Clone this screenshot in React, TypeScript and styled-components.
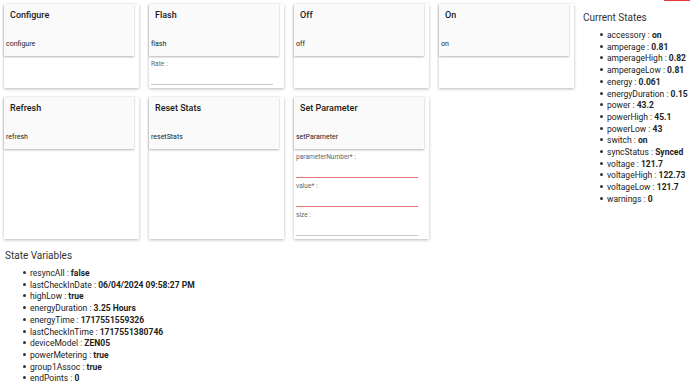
import React from 'react'
import styled, { createGlobalStyle } from 'styled-components'

const GlobalStyle = createGlobalStyle`
  body {
    margin: 0;
    background: #fff;
    font-family: Roboto, "Liberation Sans", sans-serif;
    color: #222;
  }
`

const Page = styled.div`
  padding: 4px 0 0 4px;
`

const Top = styled.div`
  display: flex;
  align-items: flex-start;
`

const Grid = styled.div`
  display: grid;
  grid-template-columns: repeat(4, 135px);
  column-gap: 10px;
  row-gap: 9px;
`

const Card = styled.div`
  background: #fff;
  box-shadow: 0 1px 3px rgba(0, 0, 0, 0.28);
  display: flex;
  flex-direction: column;
  padding-bottom: 3px;
`

const CommandHeader = styled.div`
  width: 130px;
  height: 52px;
  box-sizing: border-box;
  background: #fafafa;
  box-shadow: 0 1px 2px rgba(0, 0, 0, 0.3);
  display: flex;
  flex-direction: column;
  justify-content: space-between;
  padding: 6px 0 7px 0;
`

const CardTitle = styled.div`
  font-size: 9px;
  font-weight: 500;
  line-height: 11px;
  color: #1a1a1a;
  padding-left: 6px;
`

const CommandName = styled.div`
  font-size: 7px;
  line-height: 9px;
  color: #222;
  padding-left: 2px;
`

const Field = styled.div`
  padding: 0 2px;
  margin-top: 3px;

  &:first-of-type {
    margin-top: 1px;
  }
`

const FieldLabel = styled.div`
  font-size: 6.6px;
  line-height: 10px;
  color: #666;
`

const FieldInput = styled.div<{ $required?: boolean }>`
  width: 122px;
  height: 15px;
  border-bottom: 1px solid ${({ $required }) => ($required ? '#e57373' : '#c8c8c8')};
`

const StatesPanel = styled.div`
  margin-left: 9px;
  margin-top: 8px;
`

const SectionTitle = styled.div`
  font-size: 10px;
  line-height: 12px;
  color: #333;
`

const AttrList = styled.ul<{ $indent: number }>`
  margin: 6px 0 0 0;
  padding-left: ${({ $indent }) => $indent}px;
  list-style: none;
  font-size: 8.5px;
  line-height: 11.7px;
  color: #222;
`

const AttrItem = styled.li`
  &::before {
    content: '';
    display: inline-block;
    width: 3px;
    height: 3px;
    border-radius: 50%;
    background: #333;
    margin-left: -7px;
    margin-right: 4px;
    vertical-align: 2px;
  }
`

const AttrValue = styled.b`
  font-weight: 700;
`

const StateVars = styled.div`
  margin-top: 11px;
  padding-left: 1px;
`

const TopBar = styled.div`
  position: fixed;
  top: 0;
  right: 0;
  width: 26px;
  height: 1px;
  background: #e53935;
`

type Input = { label: string; required?: boolean }
type Command = { title: string; name: string; inputs?: Input[] }

const commands: Command[] = [
  { title: 'Configure', name: 'configure' },
  { title: 'Flash', name: 'flash', inputs: [{ label: 'Rate :' }] },
  { title: 'Off', name: 'off' },
  { title: 'On', name: 'on' },
  { title: 'Refresh', name: 'refresh' },
  { title: 'Reset Stats', name: 'resetStats' },
  {
    title: 'Set Parameter',
    name: 'setParameter',
    inputs: [
      { label: 'parameterNumber* :', required: true },
      { label: 'value* :', required: true },
      { label: 'size :' },
    ],
  },
]

const currentStates: [string, string][] = [
  ['accessory', 'on'],
  ['amperage', '0.81'],
  ['amperageHigh', '0.82'],
  ['amperageLow', '0.81'],
  ['energy', '0.061'],
  ['energyDuration', '0.15'],
  ['power', '43.2'],
  ['powerHigh', '45.1'],
  ['powerLow', '43'],
  ['switch', 'on'],
  ['syncStatus', 'Synced'],
  ['voltage', '121.7'],
  ['voltageHigh', '122.73'],
  ['voltageLow', '121.7'],
  ['warnings', '0'],
]

const stateVariables: [string, string][] = [
  ['resyncAll', 'false'],
  ['lastCheckInDate', '06/04/2024 09:58:27 PM'],
  ['highLow', 'true'],
  ['energyDuration', '3.25 Hours'],
  ['energyTime', '1717551559326'],
  ['lastCheckInTime', '1717551380746'],
  ['deviceModel', 'ZEN05'],
  ['powerMetering', 'true'],
  ['group1Assoc', 'true'],
  ['endPoints', '0'],
]

const CommandCard = ({ cmd }: { cmd: Command }) => (
  <Card>
    <CommandHeader>
      <CardTitle>{cmd.title}</CardTitle>
      <CommandName>{cmd.name}</CommandName>
    </CommandHeader>
    {cmd.inputs?.map((input) => (
      <Field key={input.label}>
        <FieldLabel>{input.label}</FieldLabel>
        <FieldInput $required={input.required} />
      </Field>
    ))}
  </Card>
)

const AttrRows = ({ rows, indent }: { rows: [string, string][]; indent: number }) => (
  <AttrList $indent={indent}>
    {rows.map(([k, v]) => (
      <AttrItem key={k}>
        {k} : <AttrValue>{v}</AttrValue>
      </AttrItem>
    ))}
  </AttrList>
)

const App = () => {
  return (
    <Page>
      <GlobalStyle />
      <TopBar />
      <Top>
        <Grid>
          {commands.map((cmd) => (
            <CommandCard key={cmd.name} cmd={cmd} />
          ))}
        </Grid>
        <StatesPanel>
          <SectionTitle>Current States</SectionTitle>
          <AttrRows rows={currentStates} indent={24} />
        </StatesPanel>
      </Top>
      <StateVars>
        <SectionTitle>State Variables</SectionTitle>
        <AttrRows rows={stateVariables} indent={25} />
      </StateVars>
    </Page>
  )
}

export default App
